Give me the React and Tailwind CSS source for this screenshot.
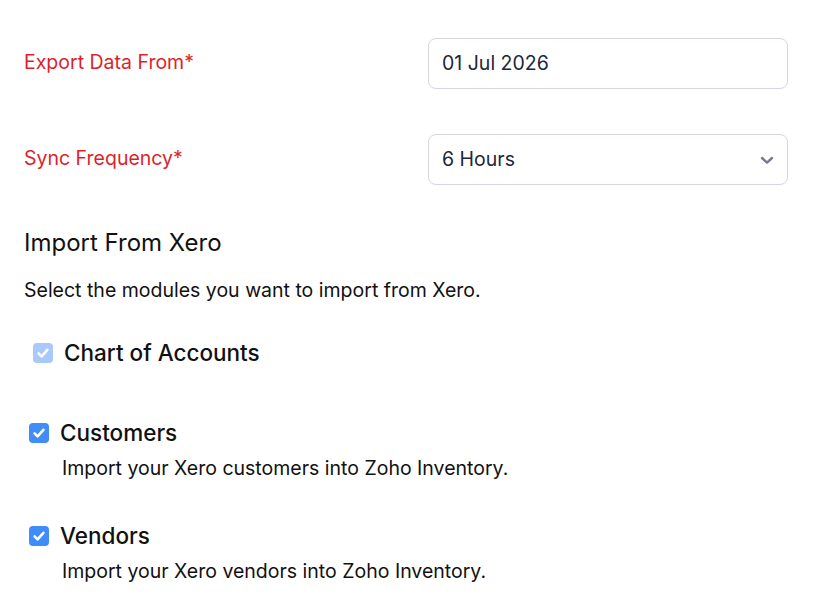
import React from "react";

function Check({ disabled }) {
  return (
    <span
      className={`flex h-5 w-5 shrink-0 items-center justify-center rounded-[4px] ${
        disabled ? "bg-[#a9c8fb]" : "bg-[#408cf9]"
      }`}
    >
      <svg viewBox="0 0 20 20" className="h-5 w-5" fill="none">
        <path
          d="M5.6 10.4l3 3 5.8-6.6"
          stroke="white"
          strokeWidth="2.6"
          strokeLinecap="round"
          strokeLinejoin="round"
        />
      </svg>
    </span>
  );
}

function Module({ title, desc }) {
  return (
    <div>
      <label className="flex items-center gap-[11px]">
        <Check />
        <span className="text-[22.5px] font-medium leading-[26px] text-[#111]">{title}</span>
      </label>
      <p className="mt-[10px] pl-[33px] text-[19.5px] leading-6 text-[#111]">{desc}</p>
    </div>
  );
}

export default function App() {
  return (
    <div className="min-h-screen bg-white pl-6 pt-[38px] font-['Inter',sans-serif]">
      <div className="grid grid-cols-[404px_360px] gap-y-[45px]">
        <div className="pt-[12px] text-[19.5px] leading-6 text-[#dd1f2c]">Export Data From*</div>
        <div className="flex h-[51px] items-center rounded-lg border border-[#d7d5e2] px-[13px] text-[19.5px] text-[#21263a]">
          01 Jul 2026
        </div>
        <div className="pt-[12px] text-[19.5px] leading-6 text-[#dd1f2c]">Sync Frequency*</div>
        <div className="flex h-[51px] items-center justify-between rounded-lg border border-[#d7d5e2] pl-[13px] pr-[12px] text-[19.5px] text-[#21263a]">
          <span>6 Hours</span>
          <svg viewBox="0 0 16 16" className="h-4 w-4" fill="none">
            <path
              d="M3 6l5 4.6L13 6"
              stroke="#7b7990"
              strokeWidth="2.4"
              strokeLinecap="round"
              strokeLinejoin="round"
            />
          </svg>
        </div>
      </div>

      <h2 className="mt-[44px] text-[24px] leading-7 text-[#111]">Import From Xero</h2>
      <p className="mt-[21px] text-[19.5px] leading-6 text-[#111]">
        Select the modules you want to import from Xero.
      </p>

      <label className="mt-[38px] flex items-center gap-[11px] pl-[9px]">
        <Check disabled />
        <span className="text-[22.5px] font-medium leading-[26px] text-[#111]">Chart of Accounts</span>
      </label>

      <div className="mt-[54px] flex flex-col gap-[43px] pl-[5px]">
        <Module title="Customers" desc="Import your Xero customers into Zoho Inventory." />
        <Module title="Vendors" desc="Import your Xero vendors into Zoho Inventory." />
      </div>
    </div>
  );
}
